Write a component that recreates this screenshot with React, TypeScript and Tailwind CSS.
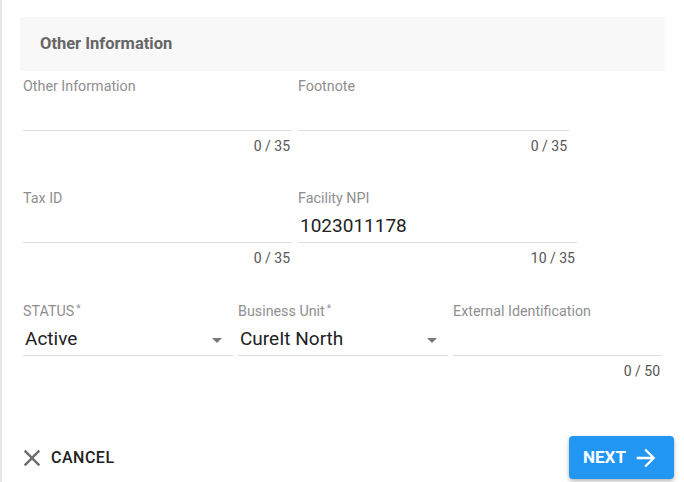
import React from "react";

type FieldProps = {
  label: string;
  required?: boolean;
  value?: string;
  counter?: string;
  select?: boolean;
  width: string;
};

function Field({ label, required, value, counter, select, width }: FieldProps) {
  return (
    <div className={`${width} flex flex-col`}>
      <div className="h-4 text-[14.3px] leading-4 text-[#8f8f8f] whitespace-nowrap">
        {label}
        {required && <span className="relative -top-[4px] ml-[2px] text-[10px]">*</span>}
      </div>
      <div className="relative h-[37px] border-b border-[#dedede] pt-[8px] pl-[2px]">
        <span className="block text-[19px] leading-6 text-[#222]">{value}</span>
        {select && (
          <svg viewBox="0 0 24 24" className="absolute right-[4px] top-[9px] h-6 w-6 fill-[#777]">
            <path d="M7 10l5 5 5-5z" />
          </svg>
        )}
      </div>
      <div className="mt-[7px] h-4 text-right text-[14px] leading-4 text-[#555] pr-[2px]">{counter}</div>
    </div>
  );
}

export default function App() {
  return (
    <div className="w-[684px] h-[482px] bg-white border-l-2 border-[#e6e6e6] font-['Roboto',sans-serif] flex flex-col">
      {/* header */}
      <div className="mt-[17px] ml-[18px] w-[645px] h-[54px] bg-[#f8f8f8] pl-5 flex items-center text-[16.5px] font-bold text-[#666]">
        Other Information
      </div>

      {/* row 1 */}
      <div className="mt-[7px] pl-[21px] flex gap-[6px]">
        <Field width="w-[269px]" label="Other Information" counter="0 / 35" />
        <Field width="w-[271px]" label="Footnote" counter="0 / 35" />
      </div>

      {/* row 2 */}
      <div className="mt-[36px] pl-[21px] flex gap-[6px]">
        <Field width="w-[269px]" label="Tax ID" counter="0 / 35" />
        <Field width="w-[279px]" label="Facility NPI" value="1023011178" counter="10 / 35" />
      </div>

      {/* row 3 */}
      <div className="mt-[37px] pl-[21px] flex gap-[5px]">
        <Field width="w-[210px]" label="STATUS" required value="Active" select />
        <Field width="w-[210px]" label="Business Unit" required value="CureIt North" select />
        <Field width="w-[209px]" label="External Identification" counter="0 / 50" />
      </div>

      {/* actions */}
      <div className="mt-auto mb-[3px] pl-[16px] pr-[10px] flex items-center justify-between">
        <button className="flex items-center gap-[5px] text-[16px] tracking-[0.5px] font-medium text-[#222]">
          <svg viewBox="0 0 24 24" className="h-[28px] w-[28px] fill-[#6b6b6b]">
            <path d="M19 6.41L17.59 5 12 10.59 6.41 5 5 6.41 10.59 12 5 17.59 6.41 19 12 13.41 17.59 19 19 17.59 13.41 12z" />
          </svg>
          CANCEL
        </button>
        <button className="w-[105px] h-[43px] rounded-[4px] bg-[#2196f3] shadow-[0_2px_4px_rgba(0,0,0,0.3)] flex items-center justify-center gap-[6px] text-[17px] font-bold text-white">
          NEXT
          <svg viewBox="0 0 24 24" className="h-[28px] w-[28px] fill-white">
            <path d="M12 4l-1.41 1.41L16.17 11H4v2h12.17l-5.58 5.59L12 20l8-8z" />
          </svg>
        </button>
      </div>
    </div>
  );
}
